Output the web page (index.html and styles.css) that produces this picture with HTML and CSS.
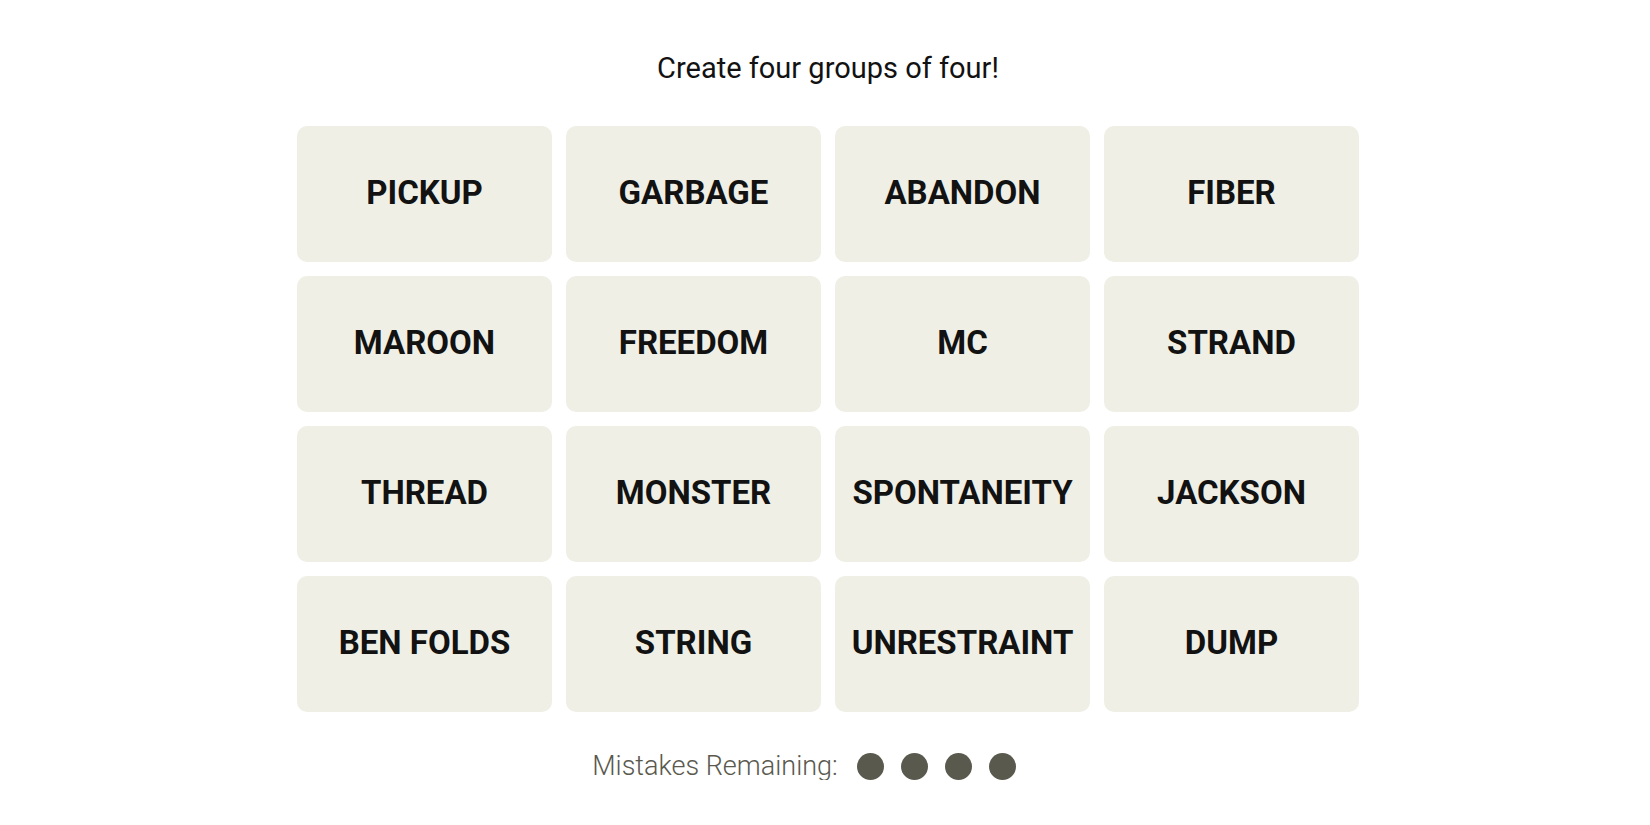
FILE: index.html
```html
<!DOCTYPE html>
<html lang="en">
<head>
<meta charset="utf-8">
<title>Connections</title>
<link rel="stylesheet" href="styles.css">
</head>
<body>
<main class="game">
  <p class="title">Create four groups of four!</p>
  <div class="board">
    <div class="tile">PICKUP</div>
    <div class="tile">GARBAGE</div>
    <div class="tile">ABANDON</div>
    <div class="tile">FIBER</div>
    <div class="tile">MAROON</div>
    <div class="tile">FREEDOM</div>
    <div class="tile">MC</div>
    <div class="tile">STRAND</div>
    <div class="tile">THREAD</div>
    <div class="tile">MONSTER</div>
    <div class="tile">SPONTANEITY</div>
    <div class="tile">JACKSON</div>
    <div class="tile">BEN FOLDS</div>
    <div class="tile">STRING</div>
    <div class="tile">UNRESTRAINT</div>
    <div class="tile">DUMP</div>
  </div>
  <div class="mistakes">
    <span class="mistakes-label">Mistakes Remaining:</span>
    <span class="dots">
      <span class="dot"></span>
      <span class="dot"></span>
      <span class="dot"></span>
      <span class="dot"></span>
    </span>
  </div>
</main>
</body>
</html>
```

FILE: styles.css
```css
html, body {
  margin: 0;
  padding: 0;
  background: #ffffff;
}

body {
  font-family: Roboto, "Liberation Sans", sans-serif;
  color: #121212;
}

.game {
  width: 1062px;
  margin-left: calc(50% - 528px);
  padding-top: 49px;
  display: flex;
  flex-direction: column;
  align-items: center;
}

.title {
  margin: 0;
  font-size: 29px;
  line-height: 38px;
  font-weight: 400;
  color: #121212;
}

.board {
  margin-top: 39px;
  display: grid;
  grid-template-columns: repeat(4, 255px);
  grid-auto-rows: 136px;
  column-gap: 14px;
  row-gap: 14px;
}

.tile {
  background: #efefe6;
  border-radius: 10px;
  display: flex;
  align-items: center;
  justify-content: center;
  padding-bottom: 4px;
  font-size: 33px;
  font-weight: 700;
  color: #121212;
}

.mistakes {
  margin-top: 41px;
  padding-right: 48px;
  display: flex;
  align-items: center;
  gap: 19px;
}

.mistakes-label {
  font-size: 27px;
  line-height: 27px;
  font-weight: 300;
  color: #5a594e;
}

.dots {
  display: flex;
  gap: 17px;
}

.dot {
  width: 27px;
  height: 27px;
  border-radius: 50%;
  background: #5a594e;
}
```
